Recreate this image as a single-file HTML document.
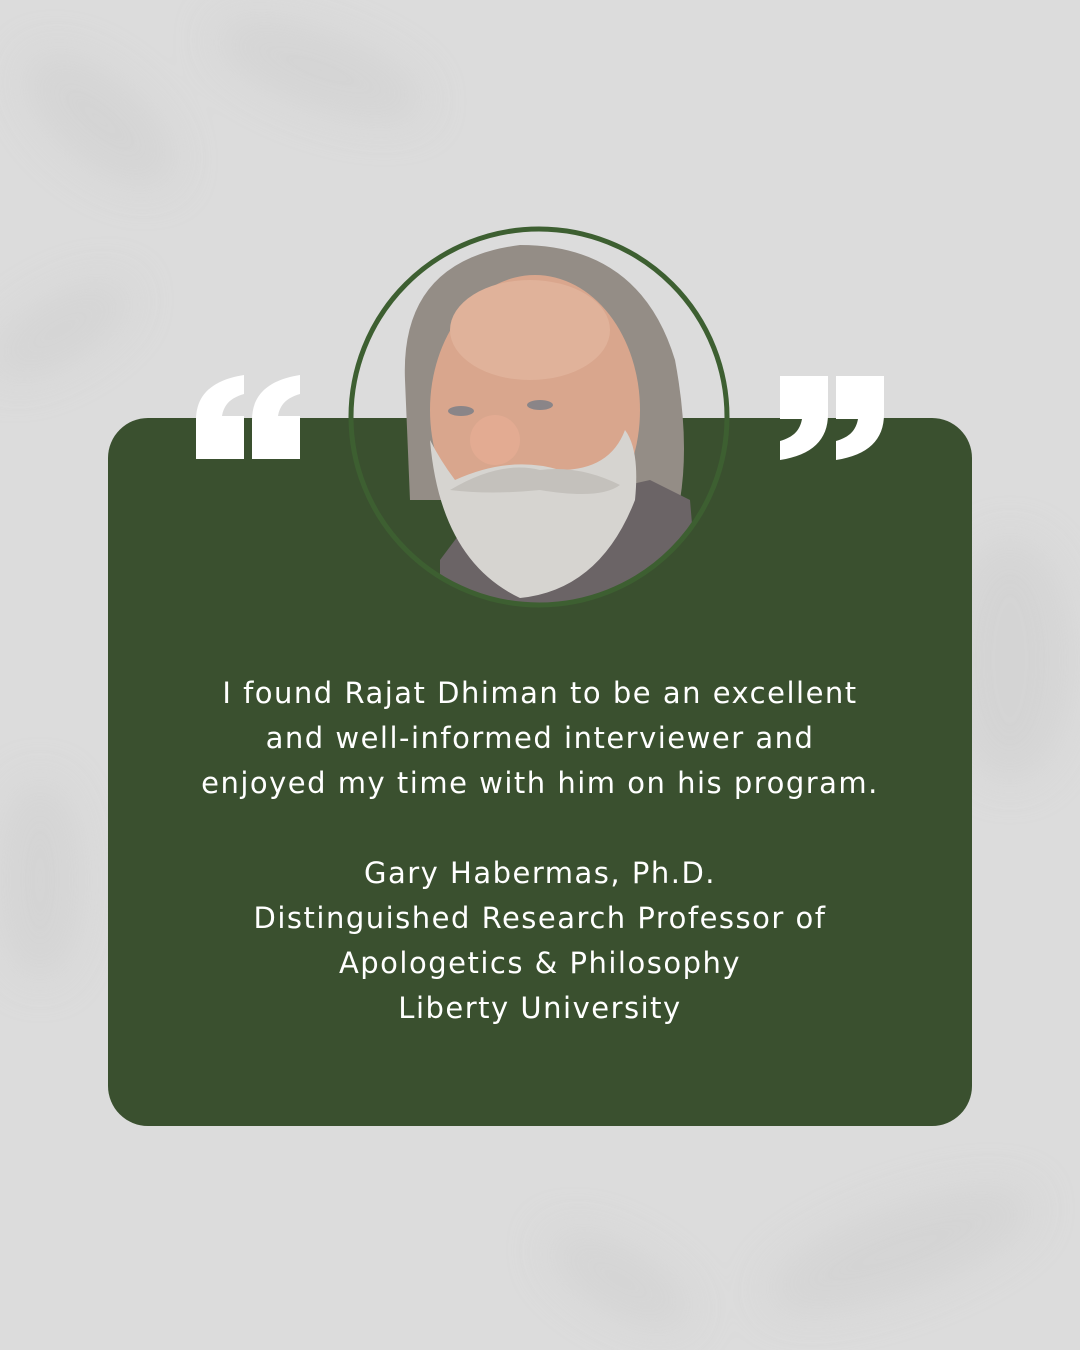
<!DOCTYPE html>
<html><head><meta charset="utf-8"><style>
html,body{margin:0;padding:0}
body{width:1080px;height:1350px;background:#dcdcdc;position:relative;overflow:hidden;font-family:"Liberation Sans",sans-serif}
.card{position:absolute;left:108px;top:418px;width:864px;height:708px;background:#3a502f;border-radius:40px}
.txt{position:absolute;left:108px;width:864px;text-align:center;color:#fff;font-family:"DejaVu Sans",sans-serif;font-size:29px;line-height:45px;letter-spacing:1.5px}
</style></head><body>
<svg width="1080" height="1350" style="position:absolute;left:0;top:0" viewBox="0 0 1080 1350">
<defs><filter id="b"><feGaussianBlur stdDeviation="22"/></filter>
<clipPath id="c"><circle cx="539" cy="417" r="187"/></clipPath></defs>
<g filter="url(#b)" fill="#cfcfcf" opacity="0.6">
<ellipse cx="100" cy="120" rx="90" ry="40" transform="rotate(40 100 120)"/>
<ellipse cx="320" cy="70" rx="110" ry="35" transform="rotate(20 320 70)"/>
<ellipse cx="60" cy="330" rx="80" ry="30" transform="rotate(-30 60 330)"/>
<ellipse cx="1010" cy="660" rx="60" ry="120"/>
<ellipse cx="900" cy="1250" rx="140" ry="40" transform="rotate(-20 900 1250)"/>
<ellipse cx="620" cy="1280" rx="80" ry="30" transform="rotate(30 620 1280)"/>
<ellipse cx="40" cy="880" rx="40" ry="100"/>
</g>
</svg>
<div class="card"></div>
<svg width="1080" height="1350" style="position:absolute;left:0;top:0" viewBox="0 0 1080 1350">
<g clip-path="url(#c)">
<path d="M405 380 Q400 260 520 245 Q640 245 675 360 Q690 440 680 500 L410 500Z" fill="#948d86"/>
<path d="M440 560 L470 520 L650 480 L690 500 L700 620 L440 620Z" fill="#6b6466"/>
<ellipse cx="535" cy="410" rx="105" ry="135" fill="#d9a68d"/>
<ellipse cx="530" cy="330" rx="80" ry="50" fill="#e0b29a"/>
<path d="M430 440 Q440 560 520 598 Q600 590 635 500 Q640 450 625 430 Q610 470 560 470 Q510 455 455 480 Q440 460 430 440Z" fill="#d6d4d0"/>
<path d="M450 490 Q500 460 540 470 Q580 465 620 485 Q600 500 540 490 Q490 495 450 490Z" fill="#c4c1bc"/>
<ellipse cx="461" cy="411" rx="13" ry="5" fill="#8a8588"/>
<ellipse cx="540" cy="405" rx="13" ry="5" fill="#8a8588"/>
<ellipse cx="495" cy="440" rx="25" ry="25" fill="#e3ab92"/>
</g>
<circle cx="539" cy="417" r="188" fill="none" stroke="#3d5f31" stroke-width="5"/>
<g fill="#fff">
<path d="M196 459 L196 420 C196 395 212 380 244 375 L244 394 C230 398 224 405 222 416 L244 416 L244 459Z"/>
<path d="M252 459 L252 420 C252 395 268 380 300 375 L300 394 C286 398 280 405 278 416 L300 416 L300 459Z"/>
<path d="M884 376 L884 414 C884 440 868 455 836 460 L836 441 C850 437 856 430 858 419 L836 419 L836 376Z"/>
<path d="M828 376 L828 414 C828 440 812 455 780 460 L780 441 C794 437 800 430 802 419 L780 419 L780 376Z"/>
</g>
</svg>
<div class="txt" style="top:671px">I found Rajat Dhiman to be an excellent<br>and well-informed interviewer and<br>enjoyed my time with him on his program.</div>
<div class="txt" style="top:851px">Gary Habermas, Ph.D.<br>Distinguished Research Professor of<br>Apologetics &amp; Philosophy<br>Liberty University</div>
</body></html>
